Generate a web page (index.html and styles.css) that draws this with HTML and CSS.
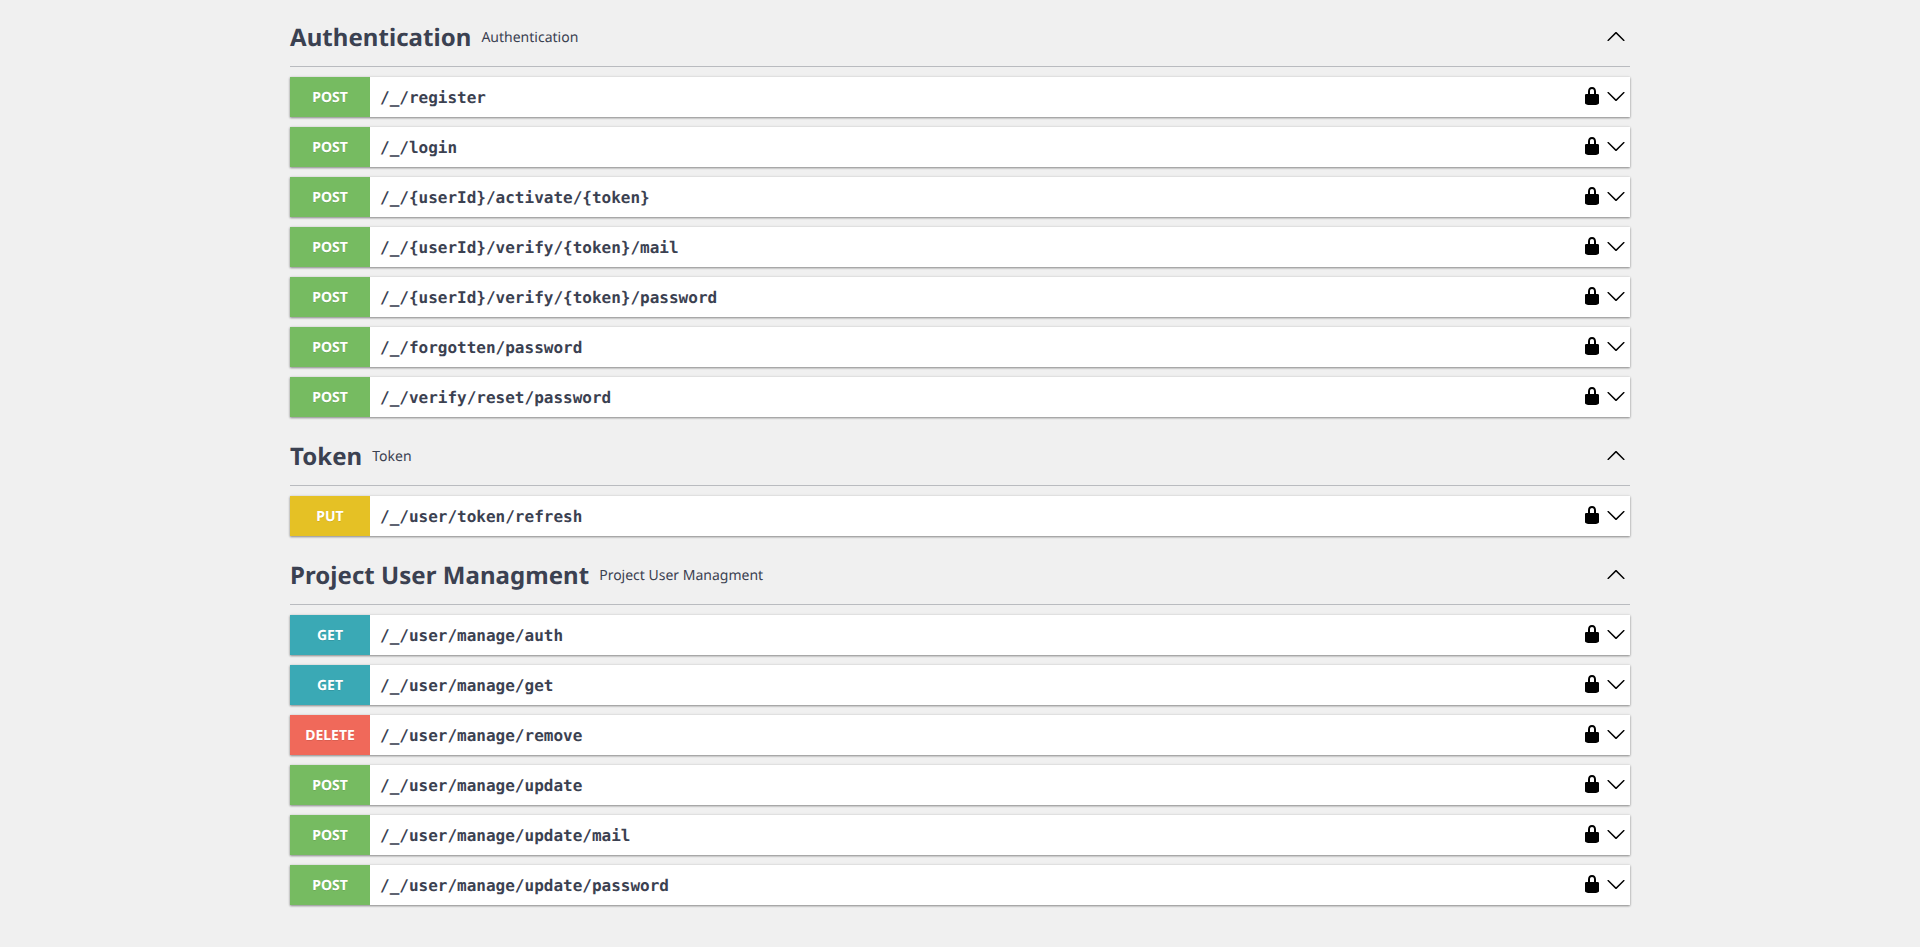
FILE: index.html
```html
<!DOCTYPE html>
<html lang="en">
<head>
<meta charset="utf-8">
<title>API</title>
<link rel="stylesheet" href="styles.css">
</head>
<body>
<svg class="defs" width="0" height="0" aria-hidden="true">
  <symbol id="lock" viewBox="0 0 20 20"><path d="M15.8 8H14V5.6C14 2.703 12.665 1 10 1 7.334 1 6 2.703 6 5.6V8H4c-.553 0-1 .646-1 1.199V17c0 .549.428 1.139.951 1.307l1.197.387C5.672 18.861 6.55 19 7.1 19h5.8c.549 0 1.428-.139 1.951-.307l1.196-.387c.524-.167.953-.757.953-1.306V9.199C17 8.646 16.352 8 15.8 8zM12 8H8V5.199C8 3.754 8.797 3 10 3c1.203 0 2 .754 2 2.199V8z"/></symbol>
  <symbol id="arrow" viewBox="0 0 20 20"><path d="M17.418 6.109c.272-.268.709-.268.979 0s.271.701 0 .969l-7.908 7.83c-.27.268-.707.268-.979 0l-7.908-7.83c-.27-.268-.27-.701 0-.969.271-.268.709-.268.979 0L10 13.25l7.418-7.141z"/></symbol>
</svg>
<main class="wrapper">
  <section class="tag-section">
    <h3 class="tag"><span class="tag-name">Authentication</span><small class="tag-desc">Authentication</small><svg class="icon flip"><use href="#arrow"/></svg></h3>
    <div class="op"><span class="method post">POST</span><span class="path">/_/register</span><span class="icons"><svg class="icon"><use href="#lock"/></svg><svg class="icon"><use href="#arrow"/></svg></span></div>
    <div class="op"><span class="method post">POST</span><span class="path">/_/login</span><span class="icons"><svg class="icon"><use href="#lock"/></svg><svg class="icon"><use href="#arrow"/></svg></span></div>
    <div class="op"><span class="method post">POST</span><span class="path">/_/{userId}/activate/{token}</span><span class="icons"><svg class="icon"><use href="#lock"/></svg><svg class="icon"><use href="#arrow"/></svg></span></div>
    <div class="op"><span class="method post">POST</span><span class="path">/_/{userId}/verify/{token}/mail</span><span class="icons"><svg class="icon"><use href="#lock"/></svg><svg class="icon"><use href="#arrow"/></svg></span></div>
    <div class="op"><span class="method post">POST</span><span class="path">/_/{userId}/verify/{token}/password</span><span class="icons"><svg class="icon"><use href="#lock"/></svg><svg class="icon"><use href="#arrow"/></svg></span></div>
    <div class="op"><span class="method post">POST</span><span class="path">/_/forgotten/password</span><span class="icons"><svg class="icon"><use href="#lock"/></svg><svg class="icon"><use href="#arrow"/></svg></span></div>
    <div class="op"><span class="method post">POST</span><span class="path">/_/verify/reset/password</span><span class="icons"><svg class="icon"><use href="#lock"/></svg><svg class="icon"><use href="#arrow"/></svg></span></div>
  </section>
  <section class="tag-section">
    <h3 class="tag"><span class="tag-name">Token</span><small class="tag-desc">Token</small><svg class="icon flip"><use href="#arrow"/></svg></h3>
    <div class="op"><span class="method put">PUT</span><span class="path">/_/user/token/refresh</span><span class="icons"><svg class="icon"><use href="#lock"/></svg><svg class="icon"><use href="#arrow"/></svg></span></div>
  </section>
  <section class="tag-section">
    <h3 class="tag"><span class="tag-name">Project User Managment</span><small class="tag-desc">Project User Managment</small><svg class="icon flip"><use href="#arrow"/></svg></h3>
    <div class="op"><span class="method get">GET</span><span class="path">/_/user/manage/auth</span><span class="icons"><svg class="icon"><use href="#lock"/></svg><svg class="icon"><use href="#arrow"/></svg></span></div>
    <div class="op"><span class="method get">GET</span><span class="path">/_/user/manage/get</span><span class="icons"><svg class="icon"><use href="#lock"/></svg><svg class="icon"><use href="#arrow"/></svg></span></div>
    <div class="op"><span class="method delete">DELETE</span><span class="path">/_/user/manage/remove</span><span class="icons"><svg class="icon"><use href="#lock"/></svg><svg class="icon"><use href="#arrow"/></svg></span></div>
    <div class="op"><span class="method post">POST</span><span class="path">/_/user/manage/update</span><span class="icons"><svg class="icon"><use href="#lock"/></svg><svg class="icon"><use href="#arrow"/></svg></span></div>
    <div class="op"><span class="method post">POST</span><span class="path">/_/user/manage/update/mail</span><span class="icons"><svg class="icon"><use href="#lock"/></svg><svg class="icon"><use href="#arrow"/></svg></span></div>
    <div class="op"><span class="method post">POST</span><span class="path">/_/user/manage/update/password</span><span class="icons"><svg class="icon"><use href="#lock"/></svg><svg class="icon"><use href="#arrow"/></svg></span></div>
  </section>
</main>
</body>
</html>
```
FILE: styles.css
```css
html, body {
  margin: 0;
  padding: 0;
  background: #f0f0f0;
  color: #3b4151;
  font-family: "Noto Sans", sans-serif;
  text-rendering: geometricPrecision;
}
.defs {
  position: absolute;
}
.wrapper {
  width: 1340px;
  margin: 0 auto;
  padding: 8px 0 42px;
}
.tag {
  display: flex;
  align-items: center;
  height: 58px;
  margin: 0 0 10px;
  border-bottom: 1px solid rgba(59, 65, 81, 0.3);
  box-sizing: content-box;
}
.tag-name {
  font-size: 24px;
  font-weight: 700;
  letter-spacing: 0.05px;
}
.tag-desc {
  flex: 1;
  padding-left: 10px;
  font-size: 14px;
  font-weight: 400;
}
.tag .icon {
  margin-right: 4px;
}
.op {
  display: flex;
  align-items: center;
  height: 40px;
  margin-bottom: 10px;
  background: #fff;
  box-shadow: 0 1px 2px rgba(0, 0, 0, 0.4), 0 0 3px rgba(0, 0, 0, 0.1);
}
.method {
  width: 80px;
  height: 40px;
  line-height: 42px;
  text-align: center;
  color: #fff;
  font-size: 14px;
  font-weight: 700;
  text-shadow: 0 1px 0 rgba(0, 0, 0, 0.1);
}
.post { background: #76bb61; }
.put { background: #e5c125; }
.get { background: #3aa9b5; }
.delete { background: #f0695a; }
.path {
  flex: 1;
  padding-left: 10px;
  font-family: "DejaVu Sans Mono", monospace;
  font-size: 16px;
  font-weight: 700;
}
.icons {
  display: flex;
  gap: 4px;
  padding: 0 4px 2px 0;
}
.icon {
  display: block;
  width: 20px;
  height: 20px;
  fill: #000;
}
.flip {
  transform: rotate(180deg);
}
```
